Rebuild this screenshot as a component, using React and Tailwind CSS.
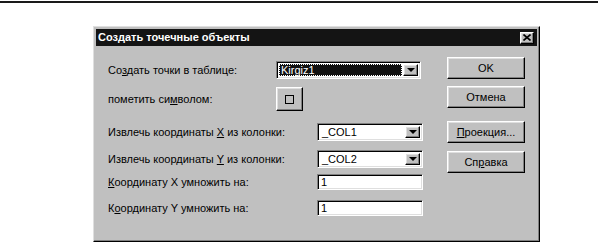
const raised =
  "border border-t-white border-l-white border-r-black border-b-black shadow-[inset_-1px_-1px_0_#808080,inset_1px_1px_0_#dfdfdf] bg-[#c0c0c0]";
const sunken =
  "border border-t-[#808080] border-l-[#808080] border-r-white border-b-white shadow-[inset_1px_1px_0_#000,inset_-1px_-1px_0_#dfdfdf]";

const Arrow = () => (
  <div className={`w-[15px] h-full flex items-center justify-center shrink-0 ${raised}`}>
    <div className="w-0 h-0 border-l-[4px] border-r-[4px] border-t-[4px] border-l-transparent border-r-transparent border-t-black" />
  </div>
);

const Combo = ({ value, selected, width }) => (
  <div className={`h-[18px] flex items-stretch bg-white p-[2px] ${sunken}`} style={{ width }}>
    <div className="flex-1 flex items-center pr-[1px]">
      {selected ? (
        <span className="h-full w-full flex items-center bg-[#111] text-white px-[2px] outline-1 outline-dotted outline-white -outline-offset-1">
          {value}
        </span>
      ) : (
        <span className="px-[2px]">{value}</span>
      )}
    </div>
    <Arrow />
  </div>
);

const Field = ({ value }) => (
  <div className={`h-[16px] w-[106px] bg-white flex items-center px-[3px] ${sunken}`}>{value}</div>
);

const Button = ({ children, className = "" }) => (
  <div className={`w-[78px] h-[22px] flex items-center justify-center ${raised} ${className}`}>
    {children}
  </div>
);

const Row = ({ label, labelWidth, children, className = "" }) => (
  <div className={`flex items-center ${className}`}>
    <div className="shrink-0" style={{ width: labelWidth }}>
      {label}
    </div>
    {children}
  </div>
);

export default function App() {
  return (
    <div
      className="w-[598px] h-[242px] bg-white overflow-hidden text-[11px] text-black"
      style={{ fontFamily: '"Liberation Sans", Arial, sans-serif' }}
    >
      <div className="mt-[1px] h-[2px] bg-[#1a1a1a]" />

      {/* Dialog */}
      <div className="ml-[93px] mt-[23px] w-[447px] h-[216px] bg-[#c0c0c0] border border-t-[#dfdfdf] border-l-[#dfdfdf] border-r-black border-b-black p-[2px] flex flex-col shadow-[inset_-1px_-1px_0_#808080]">
        {/* Title bar */}
        <div className="h-[17px] bg-[#141414] flex items-center justify-between pl-[2px] pr-[3px]">
          <span className="text-white font-bold text-[11px]">
            Создать точечные объекты
          </span>
          <div className={`w-[14px] h-[12px] flex items-center justify-center ${raised}`}>
            <svg width="8" height="7" viewBox="0 0 8 7">
              <path d="M0.5 0.5 L7.5 6.5 M7.5 0.5 L0.5 6.5" stroke="#000" strokeWidth="1.6" />
            </svg>
          </div>
        </div>

        {/* Body */}
        <div className="flex pl-[12px] pr-[12px]">
          <div className="flex-1 flex flex-col pt-[15px]">
            <Row
              labelWidth={168}
              label={
                <span>
                  Со<u className="underline-offset-1">з</u>дать точки в таблице:
                </span>
              }
            >
              <Combo value="Kirgiz1" selected width={145} />
            </Row>

            <Row
              className="mt-[8px]"
              labelWidth={168}
              label={
                <span>
                  пометить си<u className="underline-offset-1">м</u>волом:
                </span>
              }
            >
              <div className={`w-[27px] h-[24px] flex items-center justify-center ${raised}`}>
                <div className="w-[9px] h-[9px] border border-black" />
              </div>
            </Row>

            <Row
              className="mt-[12px]"
              labelWidth={209}
              label={
                <span>
                  Извлечь координаты <u className="underline-offset-1">X</u> из колонки:
                </span>
              }
            >
              <Combo value="_COL1" width={106} />
            </Row>

            <Row
              className="mt-[9px]"
              labelWidth={209}
              label={
                <span>
                  Извлечь координаты <u className="underline-offset-1">Y</u> из колонки:
                </span>
              }
            >
              <Combo value="_COL2" width={106} />
            </Row>

            <Row
              className="mt-[6px]"
              labelWidth={209}
              label={
                <span>
                  <u className="underline-offset-1">К</u>оординату X умножить на:
                </span>
              }
            >
              <Field value="1" />
            </Row>

            <Row
              className="mt-[9px]"
              labelWidth={209}
              label={
                <span>
                  К<u className="underline-offset-1">о</u>ординату Y умножить на:
                </span>
              }
            >
              <Field value="1" />
            </Row>
          </div>

          <div className="flex flex-col pt-[11px]">
            <Button>OK</Button>
            <Button className="mt-[7px]">Отмена</Button>
            <Button className="mt-[13px]">
              <span>
                <u className="underline-offset-1">П</u>роекция...
              </span>
            </Button>
            <Button className="mt-[8px]">
              <span>
                Сп<u className="underline-offset-1">р</u>авка
              </span>
            </Button>
          </div>
        </div>
      </div>
    </div>
  );
}
